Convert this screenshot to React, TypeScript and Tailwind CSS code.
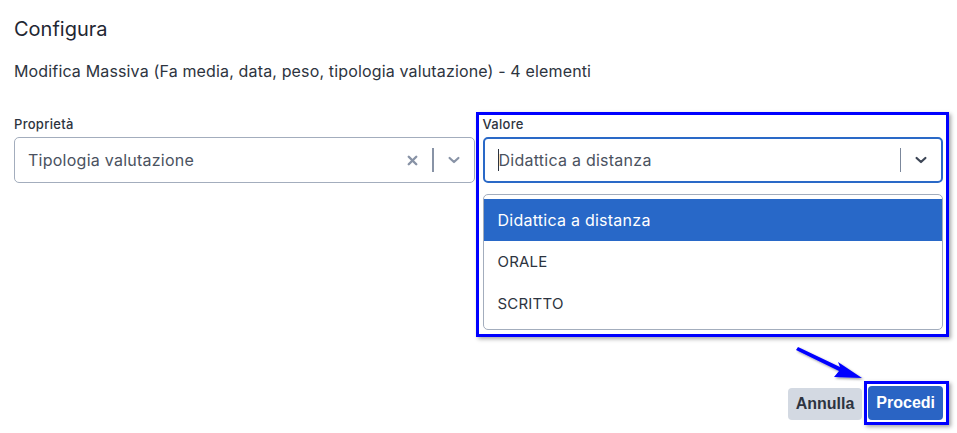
import React from "react";

const Chevron = ({ className = "" }: { className?: string }) => (
  <svg width="16" height="16" viewBox="0 0 20 20" className={className}>
    <path d="M4.5 7.5 L10 12.5 L15.5 7.5" fill="none" stroke="currentColor" strokeWidth="2.8" strokeLinecap="round" strokeLinejoin="round" />
  </svg>
);

const Cross = () => (
  <svg width="15" height="15" viewBox="0 0 20 20">
    <path d="M5 5 L15 15 M15 5 L5 15" fill="none" stroke="currentColor" strokeWidth="3.2" strokeLinecap="round" />
  </svg>
);

export default function App() {
  return (
    <div className="relative w-[957px] h-[433px] bg-white overflow-hidden text-[#2d3440]" style={{ fontFamily: "Inter, 'Noto Sans', sans-serif" }}>
      <div className="px-[14px] pt-[17px]">
        <h1 className="text-[20px] leading-[24px] font-normal text-[#1f2733]">Configura</h1>
        <p className="mt-[20px] text-[16px] leading-[20px] tracking-[0.15px] text-[#2d3440]">
          Modifica Massiva (Fa media, data, peso, tipologia valutazione) - 4 elementi
        </p>
        <div className="grid grid-cols-2 gap-2 mt-[35px]">
          <div>
            <div className="text-[13px] leading-[16px] tracking-[0.3px] text-[#2d3440] font-medium">Proprietà</div>
            <div className="mt-[5px] h-[46px] rounded-[5px] border-[1.5px] border-[#a3adbd] flex items-center pl-[13px] pr-[12px]">
              <span className="flex-1 text-[16px] tracking-[0.25px] text-[#4a5260]">Tipologia valutazione</span>
              <span className="text-[#8893a6] flex items-center"><Cross /></span>
              <span className="mx-[12px] w-[1.5px] h-[24px] bg-[#8893a6]" />
              <span className="text-[#8893a6] flex items-center"><Chevron /></span>
            </div>
          </div>
          <div>
            <div className="text-[13px] leading-[16px] tracking-[0.3px] text-[#2d3440] font-medium">Valore</div>
            <div className="mt-[5px] h-[46px] rounded-[5px] border-2 border-[#2a69c7] flex items-center pl-[13px] pr-[12px]">
              <span className="w-px h-[22px] bg-[#2d3440]" />
              <span className="flex-1 text-[16px] tracking-[0.25px] text-[#4a5260]">Didattica a distanza</span>
              <span className="mx-[12px] w-[1.5px] h-[24px] bg-[#7b879b]" />
              <span className="text-[#3d4656] flex items-center"><Chevron /></span>
            </div>
            <div className="mt-[11px] rounded-[5px] border border-[#a3adbd] py-[4px] bg-white">
              <div className="h-[42px] bg-[#2868c8] text-white flex items-center pl-[14px] text-[16px] tracking-[0.25px]">Didattica a distanza</div>
              <div className="h-[42px] flex items-center pl-[14px] text-[15px] tracking-[0.2px] text-[#2d3440]">ORALE</div>
              <div className="h-[42px] flex items-center pl-[14px] text-[15px] tracking-[0.2px] text-[#2d3440]">SCRITTO</div>
            </div>
          </div>
        </div>
        <div className="flex justify-end items-end gap-[6px] mt-[56px]" style={{ fontFamily: "'Liberation Sans', Arial, sans-serif" }}>
          <button className="h-[32px] px-[8px] rounded-[4px] bg-[#d3d9e2] text-[#2d3440] text-[16px] font-bold">Annulla</button>
          <button className="h-[34px] px-[8px] rounded-[4px] bg-[#2a64c4] text-white text-[16px] font-bold">Procedi</button>
        </div>
      </div>

      {/* annotation overlays */}
      <div className="absolute left-[476px] top-[112px] w-[473px] h-[225px] border-[3px] border-[#0000ff] shadow-[2px_2px_4px_rgba(0,0,0,0.35)] pointer-events-none" />
      <div className="absolute left-[864px] top-[381px] w-[85px] h-[44px] border-[3px] border-[#0000ff] shadow-[2px_2px_4px_rgba(0,0,0,0.35)] pointer-events-none" />
      <svg className="absolute left-[790px] top-[340px]" width="80" height="45" viewBox="0 0 80 45">
        <defs>
          <filter id="sh" x="-20%" y="-20%" width="140%" height="140%">
            <feDropShadow dx="1.5" dy="1.5" stdDeviation="1.2" floodColor="#000" floodOpacity="0.4" />
          </filter>
        </defs>
        <path d="M8 7 L50 27 L48 22 L72 38 L44 37 L49 31 L6 10 Z" fill="#0000ff" filter="url(#sh)" />
      </svg>
    </div>
  );
}
